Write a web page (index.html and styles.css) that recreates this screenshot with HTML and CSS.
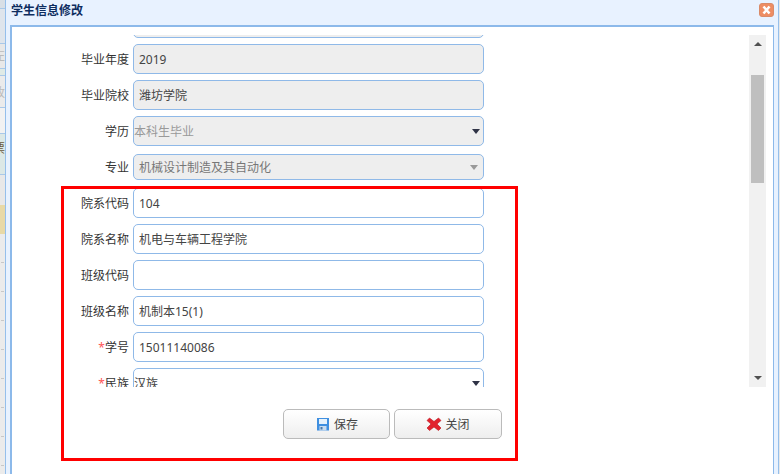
FILE: index.html
```html
<!DOCTYPE html>
<html lang="zh-CN">
<head>
    <meta charset="UTF-8">
    <title>学生信息修改</title>
    <link rel="stylesheet" href="styles.css">
</head>
<body>
    <div class="page">
        <div class="side-strip">
            <div class="strip-a"></div>
            <div class="strip-b"></div>
            <div class="strip-c"><span>左</span></div>
            <div class="strip-d"></div>
            <div class="strip-e"><span>改</span></div>
            <div class="strip-f"></div>
            <div class="strip-g"><span>票</span></div>
            <div class="strip-h"></div>
            <div class="strip-i"></div>
            <div class="strip-rest"></div>
        </div>

        <div class="window">
            <div class="win-head">
                <span class="win-title">学生信息修改</span>
                <svg class="win-close" width="15" height="14" viewBox="0 0 15 14">
                    <rect x="0.5" y="0.5" width="14" height="13" rx="2.5" fill="#ee8d63" stroke="#d98a68"/>
                    <path d="M4.5 3.5 L10.5 10.5 M10.5 3.5 L4.5 10.5" stroke="#fff" stroke-width="2.6"/>
                </svg>
            </div>

            <div class="win-body">
                <div class="scroll-area">
                    <div class="form-view">
                        <div class="rows">
                            <div class="row"><label>政治面貌</label><input class="field readonly" readonly></div>
                            <div class="row"><label>毕业年度</label><input class="field readonly" readonly value="2019"></div>
                            <div class="row"><label>毕业院校</label><input class="field readonly" readonly value="潍坊学院"></div>
                            <div class="row">
                                <label>学历</label>
                                <div class="combo readonly">
                                    <span class="combo-text muted">本科生毕业</span>
                                    <i class="arrow"></i>
                                </div>
                            </div>
                            <div class="row">
                                <label>专业</label>
                                <div class="combo readonly small">
                                    <span class="combo-text padded muted-dark">机械设计制造及其自动化</span>
                                    <i class="arrow gray"></i>
                                </div>
                            </div>
                            <div class="row"><label>院系代码</label><input class="field" value="104"></div>
                            <div class="row"><label>院系名称</label><input class="field" value="机电与车辆工程学院"></div>
                            <div class="row"><label>班级代码</label><input class="field"></div>
                            <div class="row"><label>班级名称</label><input class="field" value="机制本15(1)"></div>
                            <div class="row"><label><em>*</em>学号</label><input class="field" value="15011140086"></div>
                            <div class="row">
                                <label><em>*</em>民族</label>
                                <div class="combo">
                                    <span class="combo-text">汉族</span>
                                    <i class="arrow"></i>
                                </div>
                            </div>
                        </div>
                    </div>
                    <div class="scrollbar">
                        <i class="sb-up"></i>
                        <div class="sb-thumb"></div>
                        <i class="sb-down"></i>
                    </div>
                </div>

                <div class="actions">
                    <button class="btn">
                        <svg width="16" height="16" viewBox="0 0 16 16">
                            <path d="M2 2 H14 V14.5 H2 Z" fill="#3f8fe0"/>
                            <rect x="4" y="3" width="8" height="5" fill="#e6f2fc"/>
                            <rect x="4.5" y="10" width="7" height="4.5" fill="#c9dcef"/>
                            <rect x="5.5" y="11" width="2" height="2.5" fill="#4a78a8"/>
                        </svg>
                        保存
                    </button>
                    <button class="btn">
                        <svg width="16" height="16" viewBox="0 0 16 16">
                            <path d="M3.5 2 L8 5.5 L12.5 2 L15 4.5 L11 8 L15 12 L12.5 14.5 L8 11 L3.5 14.5 L1 12 L5 8 L1 4.5 Z" fill="#e2232e" stroke="#b9141e" stroke-width="0.6"/>
                        </svg>
                        关闭
                    </button>
                </div>
            </div>
        </div>

        <div class="right-strip"></div>
    </div>

    <div class="highlight"></div>
</body>
</html>
```

FILE: styles.css
```css
* { box-sizing: border-box; }
html, body { margin: 0; height: 100%; overflow: hidden; }
body { font-family: "Noto Sans", "Noto Sans CJK SC", sans-serif; font-size: 12px; color: #444; background: #fff; }

.page { display: flex; height: 474px; }

/* bit of the page behind the dialog */
.side-strip { width: 5px; flex: none; overflow: hidden; font-size: 12px; line-height: 14px; color: #bbb; }
.side-strip div { overflow: hidden; border-bottom: 1px solid #a9c8e8; }
.side-strip span { display: block; margin-left: -7px; }
.strip-a { height: 9px; background: #d8dfe6; }
.strip-b { height: 35px; background: #dfe5ec; }
.strip-c { height: 25px; background: #e8e8e8; padding-top: 5px; }
.strip-d { height: 7px; background: #dfeae6; }
.strip-e { height: 32px; background: #ebebeb; padding-top: 10px; }
.strip-f { height: 26px; background: #f2f2f2; }
.strip-g { height: 41px; background: #dce8e6; padding-top: 8px; color: #6b5a3c; }
.strip-h { height: 30px; background: #e8e8e8; border-bottom: 0 !important; }
.strip-i { height: 29px; background: #e8d9a6; border-bottom: 0 !important; }
.side-strip .strip-rest {
    height: 240px;
    border-bottom: 0;
    background: repeating-linear-gradient(transparent 0 28px, #c8c8c8 28px 29px) 1px 0 / 3px 100% no-repeat, #ebebeb;
}

.right-strip { width: 1px; flex: none; background: #e8e8e8; }

.window { flex: 1; display: flex; flex-direction: column; min-width: 0; padding: 0 4px; background: #e8f2ff; border-left: 1px solid #95bfeb; border-right: 1px solid #95bfeb; }
.win-head { height: 25px; flex: none; display: flex; align-items: flex-start; justify-content: space-between; padding: 3px 0 0 1px; }
.win-title { font-weight: 700; color: #0e2d5f; line-height: 16px; }

.win-body { flex: 1; background: #fff; border: solid #8cb9ea; border-width: 2px 1px 0 2px; }

.scroll-area { display: flex; height: 352px; margin-top: 8px; padding-right: 7px; }
.form-view { flex: 1; overflow: hidden; }
.rows { margin-top: -30px; }
.row { height: 36px; display: flex; align-items: center; gap: 4px; }
.row label { width: 117px; flex: none; text-align: right; color: #333; }
.row em { font-style: normal; color: #f55; }

.field, .combo { width: 351px; height: 30px; flex: none; border: 1px solid #8fb9e8; border-radius: 5px; background: #fff; color: #444; }
.field { padding: 0 5px; font: inherit; outline: none; }
.readonly { background: #eee; }
.combo { display: flex; align-items: center; justify-content: space-between; padding-right: 3px; }
.combo.small { height: 26px; padding-right: 5px; }
.combo-text.padded { padding-left: 5px; }
.muted { color: #999; }
.muted-dark { color: #777; }

.arrow { width: 0; height: 0; border: 4px solid transparent; border-top: 5px solid #2f3346; border-bottom: 0; }
.arrow.gray { border-top-color: #999; }

.scrollbar { width: 17px; flex: none; background: #f1f1f1; display: flex; flex-direction: column; align-items: center; padding: 7px 0; }
.sb-up { width: 0; height: 0; border: 4px solid transparent; border-bottom: 4px solid #505050; border-top: 0; }
.sb-thumb { width: 13px; height: 108px; margin-top: 29px; background: #bfbfbf; }
.sb-down { width: 0; height: 0; margin-top: auto; border: 4px solid transparent; border-top: 4px solid #505050; border-bottom: 0; }

.actions { display: flex; gap: 4px; margin-top: 22px; padding-left: 271px; }
.btn { width: 107px; height: 30px; display: flex; align-items: center; justify-content: center; gap: 3px; padding: 0; border: 1px solid #bbb; border-radius: 5px; background: linear-gradient(#fff, #eee); font: inherit; color: #444; }
.btn + .btn { width: 108px; }

/* red annotation drawn over the shot */
.highlight { position: absolute; left: 61px; top: 186px; width: 457px; height: 275px; border: 3px solid #f00; }
```
